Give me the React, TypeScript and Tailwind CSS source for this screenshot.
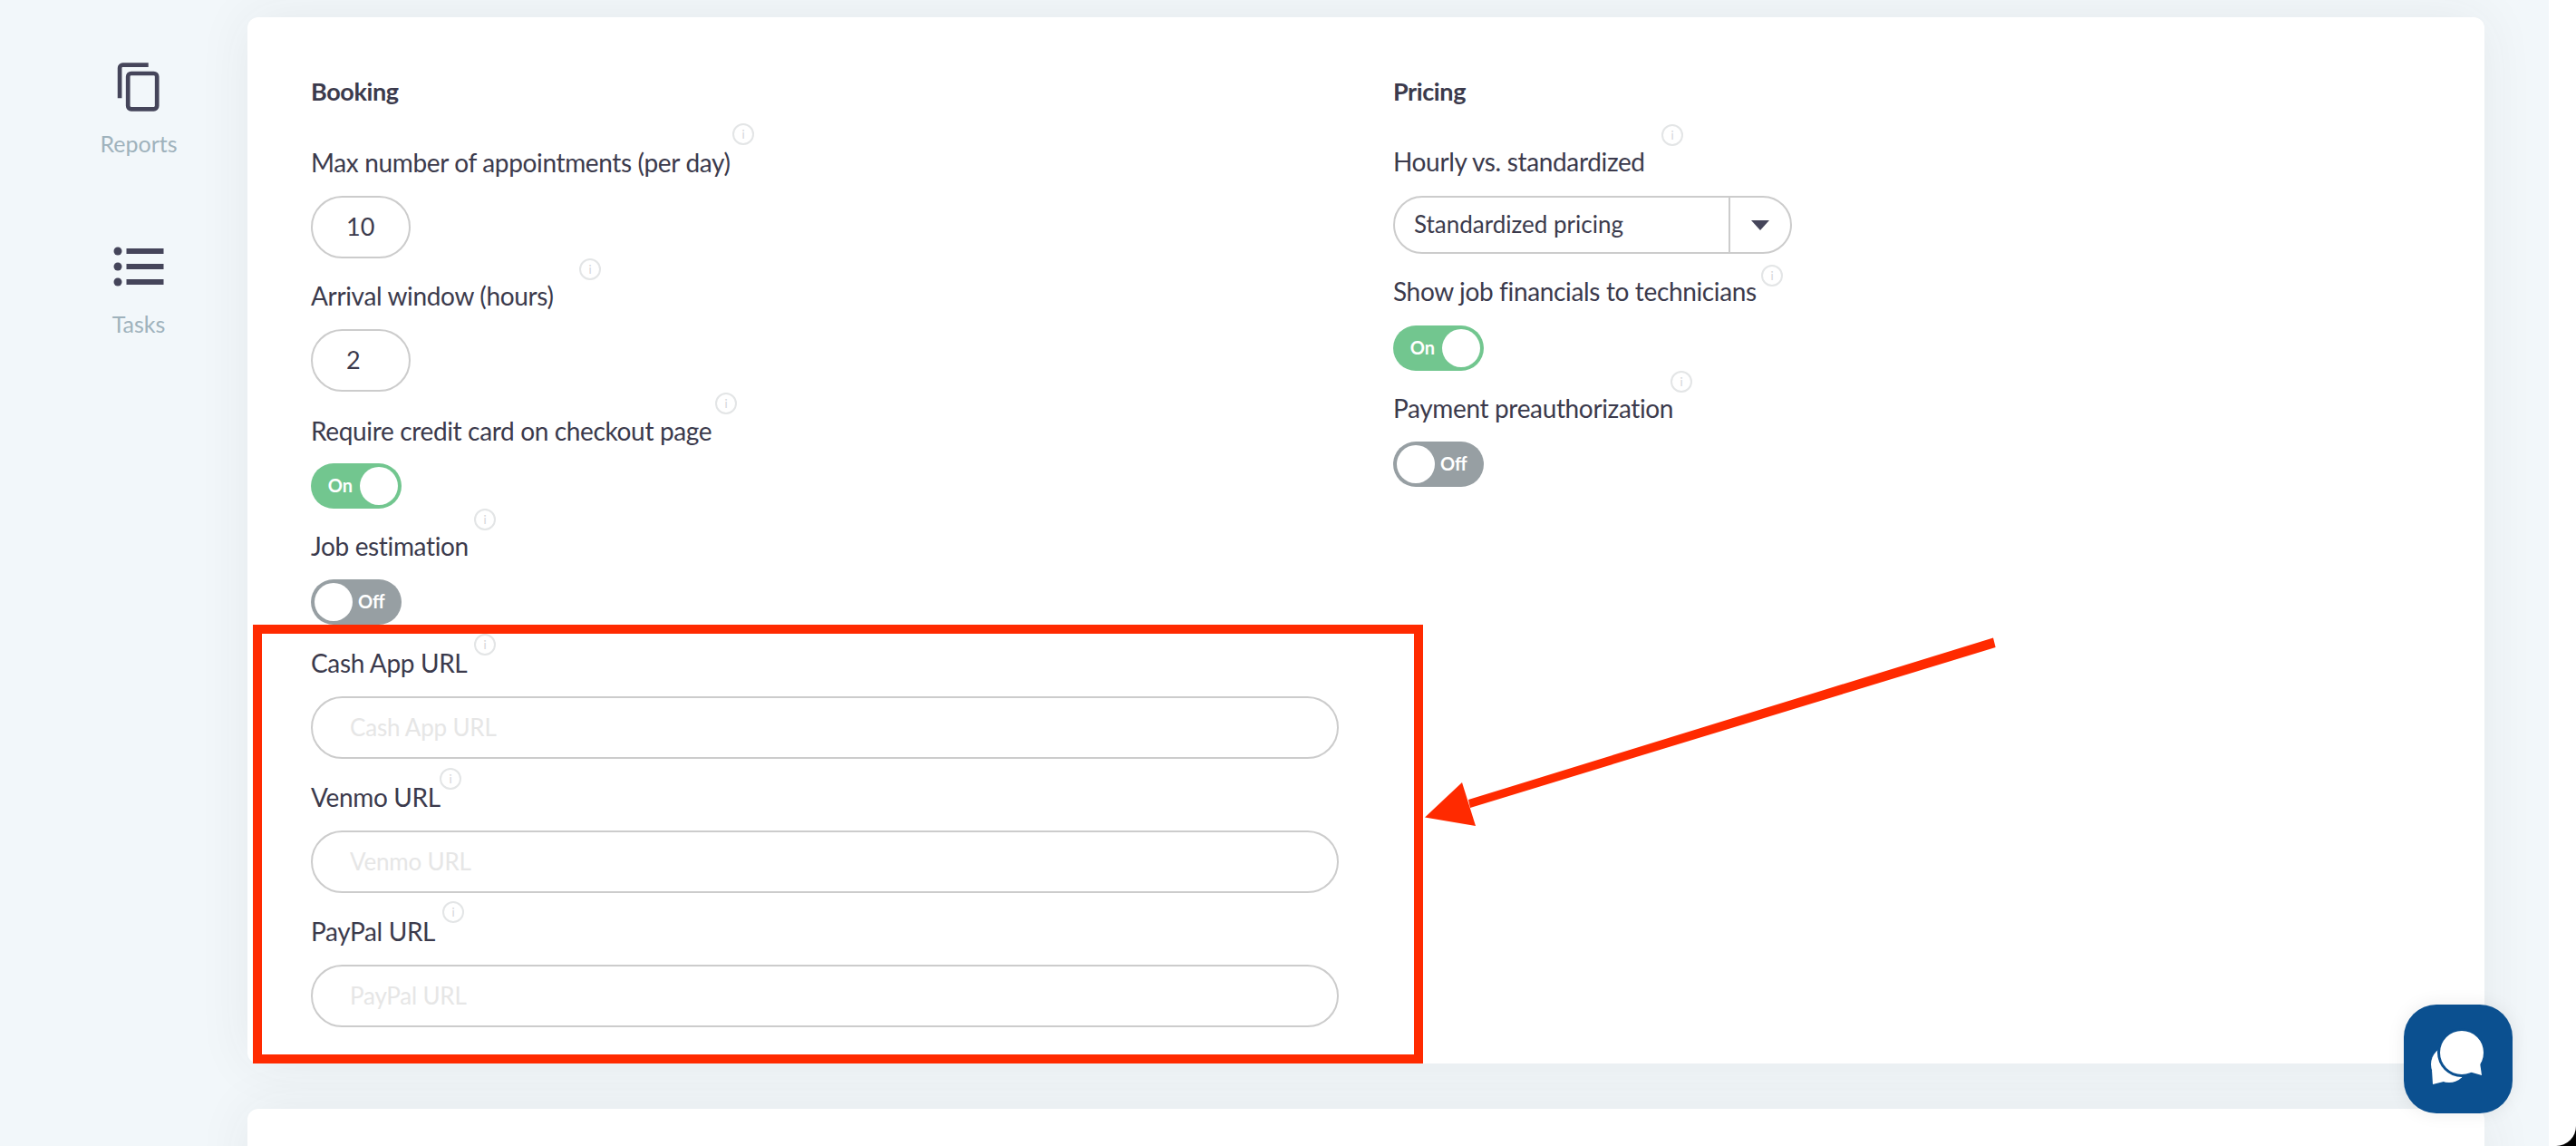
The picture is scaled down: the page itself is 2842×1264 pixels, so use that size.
import React from 'react';

const InfoIcon: React.FC<{ className: string }> = ({ className }) => (
  <span className={`absolute flex h-6 w-6 items-center justify-center rounded-full border-2 border-[#e3e5e6] text-[13px] leading-none text-[#d4d6d8] ${className}`}>i</span>
);

const Label: React.FC<{ text: string; icon: string; className?: string }> = ({ text, icon, className = '' }) => (
  <div className={`relative h-10 text-[28px] leading-[37px] tracking-[-0.35px] text-[#3b3a4c] ${className}`}>
    {text}
    <InfoIcon className={icon} />
  </div>
);

const Toggle: React.FC<{ on: boolean; className?: string }> = ({ on, className = '' }) => (
  <button className={`flex h-[50px] w-[100px] items-center rounded-full p-1 text-[20px] font-bold text-white ${on ? 'justify-end bg-[#72c68f]' : 'bg-[#979fa3]'} ${className}`}>
    {on ? (
      <>
        <span className="mr-[8px] -translate-y-px">On</span>
        <span className="h-[42px] w-[42px] rounded-full bg-white" />
      </>
    ) : (
      <>
        <span className="h-[42px] w-[42px] rounded-full bg-white" />
        <span className="ml-[6px] -translate-y-px">Off</span>
      </>
    )}
  </button>
);

const UrlField: React.FC<{ text: string; icon: string; className?: string }> = ({ text, icon, className = '' }) => (
  <div className={className}>
    <Label text={text} icon={icon} />
    <input
      placeholder={text}
      className="mt-[15px] block h-[69px] w-[1134px] rounded-full border-2 border-[#cccccc] bg-white pb-[2px] pl-[41px] text-[26px] tracking-[-0.2px] outline-none placeholder:text-[#e6e6e6]"
    />
  </div>
);

const NumberField: React.FC<{ value: string }> = ({ value }) => (
  <input
    defaultValue={value}
    className="mt-[15px] block h-[69px] w-[110px] rounded-full border-2 border-[#cccccc] bg-white pb-[2px] pl-[37px] text-[27px] text-[#3b3a4c] outline-none"
  />
);

const CopyIcon = () => (
  <svg width="48" height="54" viewBox="0 0 48 54" fill="none" stroke="#45455a" strokeWidth="4.7">
    <path d="M3.1 39.3V6a3.3 3.3 0 0 1 3.3-3.3H34.7" />
    <rect x="12.2" y="12" width="32" height="39.3" rx="3.5" />
  </svg>
);

const TasksIcon = () => (
  <svg width="56" height="44" viewBox="0 0 56 44" fill="#45455a">
    <circle cx="5" cy="5" r="4.5" />
    <circle cx="5" cy="22" r="4.5" />
    <circle cx="5" cy="39" r="4.5" />
    <rect x="14.5" y="2" width="41" height="6" />
    <rect x="14.5" y="19" width="41" height="6" />
    <rect x="14.5" y="36" width="41" height="6" />
  </svg>
);

const ChatIcon = () => (
  <svg width="120" height="120" viewBox="0 0 120 120">
    <circle cx="50" cy="66" r="20" fill="#fff" />
    <polygon points="32,88 31,72 44,85" fill="#fff" />
    <circle cx="64" cy="53" r="27" fill="#0b5090" />
    <circle cx="64" cy="53" r="24" fill="#fff" />
    <polygon points="72,74 86,78 84,64" fill="#fff" />
  </svg>
);

export default function App() {
  return (
    <div className="h-screen w-full overflow-hidden bg-black font-['Lato',sans-serif]">
      <div className="flex h-full w-full overflow-hidden rounded-br-[22px] bg-white">
        <div className="relative flex h-full w-[2812px] bg-[#f2f7fa]">
          {/* sidebar */}
          <aside className="flex w-[273px] shrink-0 flex-col items-center pl-[33px] text-[25px] text-[#9fb2bc]">
            <div className="mt-[69px]"><CopyIcon /></div>
            <span className="mt-[19px] leading-8">Reports</span>
            <div className="mt-[98px]"><TasksIcon /></div>
            <span className="mt-[25px] leading-8">Tasks</span>
          </aside>

          {/* cards */}
          <main className="flex w-[2468px] shrink-0 flex-col gap-[50px] pt-[19px]">
            <section className="grid h-[1154px] shrink-0 grid-cols-[1134px_1fr] gap-x-[60px] rounded-xl bg-white pl-[70px] pt-[64px] shadow-[0_0_60px_rgba(50,60,60,0.07)]">
              <div>
                <h3 className="h-9 text-[27px] font-bold leading-9 tracking-[-0.4px] text-[#3b3a4c]">Booking</h3>
                <Label text="Max number of appointments (per day)" icon="left-[465px] -top-[25px]" className="mt-[42px]" />
                <NumberField value="10" />
                <Label text="Arrival window (hours)" icon="left-[296px] -top-[23px]" className="mt-[23px]" />
                <NumberField value="2" />
                <Label text="Require credit card on checkout page" icon="left-[446px] -top-[24px]" className="mt-[25px]" />
                <Toggle on className="mt-[14px]" />
                <Label text="Job estimation" icon="left-[180px] -top-[23px]" className="mt-[23px]" />
                <Toggle on={false} className="mt-[15px]" />
                <UrlField text="Cash App URL" icon="left-[180px] -top-[14px]" className="mt-[24px]" />
                <UrlField text="Venmo URL" icon="left-[142px] -top-[14px]" className="mt-[24px]" />
                <UrlField text="PayPal URL" icon="left-[145px] -top-[15px]" className="mt-[24px]" />
              </div>
              <div>
                <h3 className="h-9 text-[27px] font-bold leading-9 tracking-[-0.4px] text-[#3b3a4c]">Pricing</h3>
                <Label text="Hourly vs. standardized" icon="left-[296px] -top-[23px]" className="mt-[41px]" />
                <div className="mt-[16px] flex h-[64px] w-[440px] items-center rounded-full border-2 border-[#cccccc] text-[26px] text-[#3b3a4c]">
                  <span className="flex-1 pb-[2px] pl-[21px]">Standardized pricing</span>
                  <span className="flex h-full w-[68px] items-center justify-center border-l-2 border-[#cccccc]">
                    <svg width="20" height="11" viewBox="0 0 20 11" fill="#45455a"><path d="M0 0h20L10 11z" /></svg>
                  </span>
                </div>
                <Label text="Show job financials to technicians" icon="left-[406px] -top-[11px]" className="mt-[23px]" />
                <Toggle on className="mt-[16px]" />
                <Label text="Payment preauthorization" icon="left-[306px] -top-[23px]" className="mt-[23px]" />
                <Toggle on={false} className="mt-[15px]" />
              </div>
            </section>
            <section className="h-[200px] shrink-0 rounded-xl bg-white shadow-[0_0_60px_rgba(50,60,60,0.07)]" />
          </main>

          {/* annotation laid over the page */}
          <div className="absolute left-[279px] top-[689px] h-[484px] w-[1291px] border-[10px] border-[#ff2a00]" />
          <svg className="absolute left-[1560px] top-[695px]" width="660" height="230" viewBox="0 0 660 230" fill="#ff2a00">
            <polygon points="639,8.5 641.6,19 62,196 60,187" />
            <polygon points="12,206.5 53,168 68,216" />
          </svg>

          <button className="absolute left-[2652px] top-[1108px] h-[120px] w-[120px] rounded-[36px] bg-[#0b5090] shadow-[0_0_20px_rgba(0,0,0,0.08)]">
            <ChatIcon />
          </button>
        </div>
      </div>
    </div>
  );
}
